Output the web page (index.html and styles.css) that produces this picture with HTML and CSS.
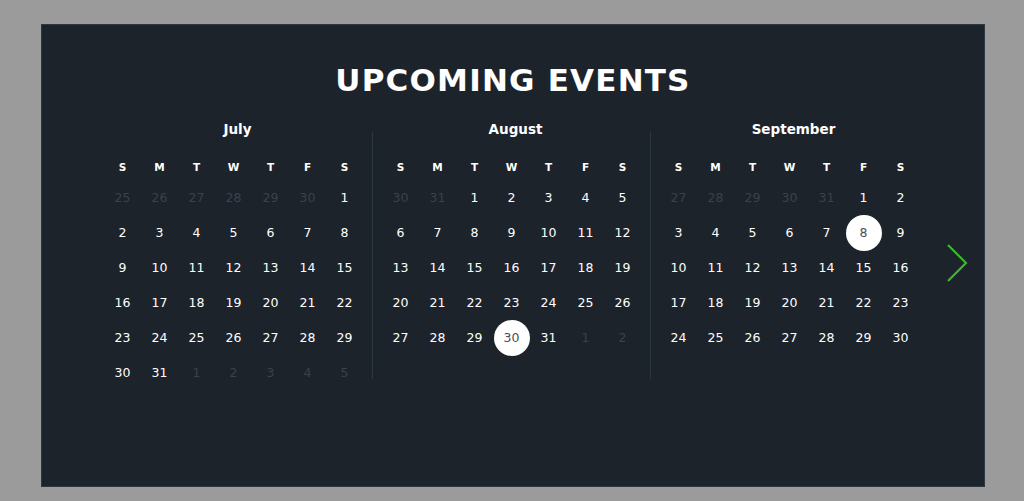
FILE: index.html
```html
<!DOCTYPE html>
<html>
<head>
<meta charset="utf-8">
<link rel="stylesheet" href="styles.css">
</head>
<body>
<div class="panel">
  <h1 class="title">UPCOMING EVENTS</h1>
  <div class="cal-row">
    <div class="months">
      <div class="month">
        <div class="month-name">July</div>
        <div class="grid">
          <span class="wd">S</span><span class="wd">M</span><span class="wd">T</span><span class="wd">W</span><span class="wd">T</span><span class="wd">F</span><span class="wd">S</span>
          <span class="d off">25</span><span class="d off">26</span><span class="d off">27</span><span class="d off">28</span><span class="d off">29</span><span class="d off">30</span><span class="d">1</span>
          <span class="d">2</span><span class="d">3</span><span class="d">4</span><span class="d">5</span><span class="d">6</span><span class="d">7</span><span class="d">8</span>
          <span class="d">9</span><span class="d">10</span><span class="d">11</span><span class="d">12</span><span class="d">13</span><span class="d">14</span><span class="d">15</span>
          <span class="d">16</span><span class="d">17</span><span class="d">18</span><span class="d">19</span><span class="d">20</span><span class="d">21</span><span class="d">22</span>
          <span class="d">23</span><span class="d">24</span><span class="d">25</span><span class="d">26</span><span class="d">27</span><span class="d">28</span><span class="d">29</span>
          <span class="d">30</span><span class="d">31</span><span class="d off">1</span><span class="d off">2</span><span class="d off">3</span><span class="d off">4</span><span class="d off">5</span>
        </div>
      </div>
      <div class="month">
        <div class="month-name">August</div>
        <div class="grid">
          <span class="wd">S</span><span class="wd">M</span><span class="wd">T</span><span class="wd">W</span><span class="wd">T</span><span class="wd">F</span><span class="wd">S</span>
          <span class="d off">30</span><span class="d off">31</span><span class="d">1</span><span class="d">2</span><span class="d">3</span><span class="d">4</span><span class="d">5</span>
          <span class="d">6</span><span class="d">7</span><span class="d">8</span><span class="d">9</span><span class="d">10</span><span class="d">11</span><span class="d">12</span>
          <span class="d">13</span><span class="d">14</span><span class="d">15</span><span class="d">16</span><span class="d">17</span><span class="d">18</span><span class="d">19</span>
          <span class="d">20</span><span class="d">21</span><span class="d">22</span><span class="d">23</span><span class="d">24</span><span class="d">25</span><span class="d">26</span>
          <span class="d">27</span><span class="d">28</span><span class="d">29</span><span class="d"><b class="event">30</b></span><span class="d">31</span><span class="d off">1</span><span class="d off">2</span>
        </div>
      </div>
      <div class="month">
        <div class="month-name">September</div>
        <div class="grid">
          <span class="wd">S</span><span class="wd">M</span><span class="wd">T</span><span class="wd">W</span><span class="wd">T</span><span class="wd">F</span><span class="wd">S</span>
          <span class="d off">27</span><span class="d off">28</span><span class="d off">29</span><span class="d off">30</span><span class="d off">31</span><span class="d">1</span><span class="d">2</span>
          <span class="d">3</span><span class="d">4</span><span class="d">5</span><span class="d">6</span><span class="d">7</span><span class="d"><b class="event">8</b></span><span class="d">9</span>
          <span class="d">10</span><span class="d">11</span><span class="d">12</span><span class="d">13</span><span class="d">14</span><span class="d">15</span><span class="d">16</span>
          <span class="d">17</span><span class="d">18</span><span class="d">19</span><span class="d">20</span><span class="d">21</span><span class="d">22</span><span class="d">23</span>
          <span class="d">24</span><span class="d">25</span><span class="d">26</span><span class="d">27</span><span class="d">28</span><span class="d">29</span><span class="d">30</span>
        </div>
      </div>
    </div>
    <button class="next" aria-label="Next">
      <svg width="24" height="40" viewBox="0 0 24 40"><path d="M3 2 L21 20 L3 38" fill="none" stroke="#3cb62c" stroke-width="2.2"/></svg>
    </button>
  </div>
</div>
</body>
</html>
```
FILE: styles.css
```css
html, body {
  margin: 0;
  padding: 0;
}
body {
  background: #9b9b9b;
  font-family: "DejaVu Sans", "Liberation Sans", sans-serif;
}
.panel {
  box-sizing: border-box;
  width: 944px;
  height: 463px;
  margin: 24px 0 0 41px;
  background: #1d232b;
  border: 1px solid #2c3944;
  padding: 35px 0 0 53px;
}
.title {
  margin: 0 0 0 -53px;
  text-align: center;
  color: #ffffff;
  font-size: 31px;
  line-height: 40px;
  font-weight: 800;
  letter-spacing: 1.2px;
}
.cal-row {
  display: flex;
  align-items: flex-start;
  margin-top: 32px;
}
.months {
  display: flex;
}
.month {
  display: flex;
  flex-direction: column;
  padding: 0 9px;
  border-right: 1px solid #2a3a3e;
  height: 247px;
}
.month:last-child {
  border-right-color: transparent;
}
.month-name {
  color: #ffffff;
  font-size: 13.5px;
  font-weight: 700;
  text-align: center;
  line-height: 16px;
  padding-left: 8px;
  margin-top: -11px;
}
.grid {
  display: grid;
  grid-template-columns: repeat(7, 37px);
  grid-auto-rows: 35px;
  grid-template-rows: 27px;
  padding-top: 22px;
  margin-top: -6px;
}
.wd {
  display: flex;
  align-items: center;
  justify-content: center;
  color: #ffffff;
  font-size: 10.5px;
  font-weight: 700;
}
.d {
  display: flex;
  align-items: center;
  justify-content: center;
  color: #ffffff;
  font-size: 12.5px;
  font-weight: 500;
}
.d.off {
  color: #3a424a;
}
.event {
  display: flex;
  align-items: center;
  justify-content: center;
  width: 36px;
  height: 36px;
  border-radius: 50%;
  background: #ffffff;
  color: #4a4f55;
  font-weight: 500;
}
.next {
  background: none;
  border: 0;
  padding: 0;
  margin: 111px 0 0 16px;
  cursor: pointer;
  display: block;
}
.next svg {
  display: block;
}
```
